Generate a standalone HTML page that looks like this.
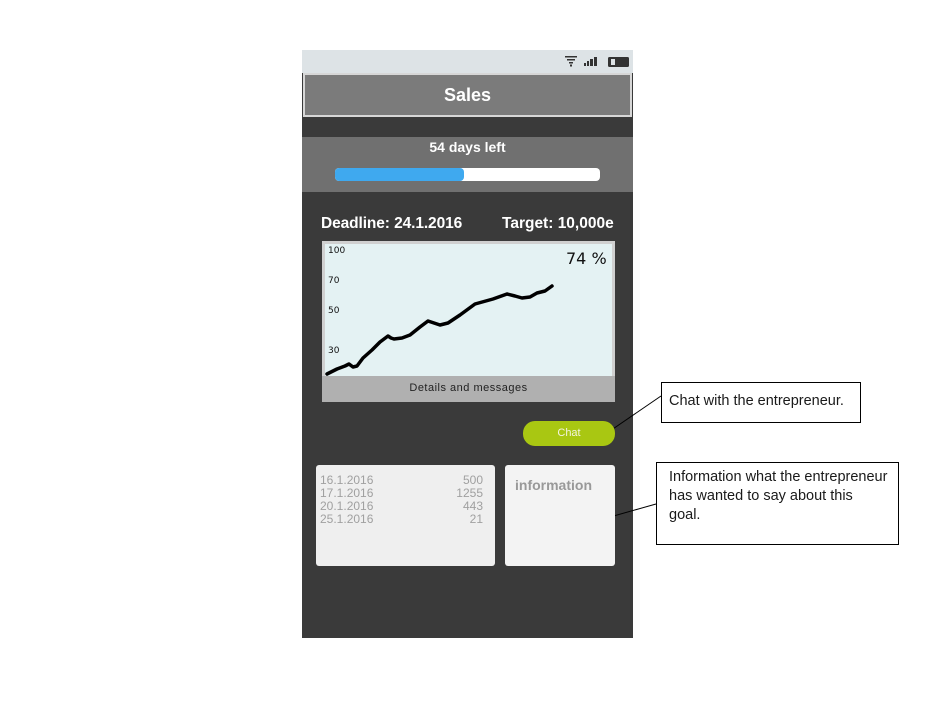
<!DOCTYPE html>
<html><head><meta charset="utf-8"><style>
*{margin:0;padding:0;box-sizing:border-box}
body{width:927px;height:707px;background:#fff;position:relative;font-family:"Liberation Sans",Arial,sans-serif;overflow:hidden}
.a{position:absolute}
.note{position:absolute;border:1px solid #000;background:#fff;font-family:"Liberation Sans",sans-serif;font-size:14.5px;color:#1a1a1a;line-height:19px;padding:0 0 0 12px;white-space:nowrap}
</style></head><body>
<div class="a" style="left:302px;top:50px;width:331px;height:588px;background:#3a3a3a"></div>
<div class="a" style="left:302px;top:50px;width:331px;height:23px;background:#dde3e6"></div>
<svg class="a" style="left:560px;top:50px" width="75" height="23">
<g fill="#333"><rect x="5" y="6" width="12" height="1.5"/><rect x="7" y="9" width="8" height="1.5"/><rect x="9" y="12" width="4" height="1.5"/><rect x="10" y="14.5" width="2" height="2"/>
<rect x="24" y="13" width="2" height="3"/><rect x="27" y="11" width="2" height="5"/><rect x="30" y="9" width="3" height="7"/><rect x="34" y="7" width="3" height="9"/>
<rect x="48" y="7" width="21" height="10" rx="1.5"/></g><rect x="51" y="9" width="4" height="6" fill="#dde3e6"/></svg>
<div class="a" style="left:303px;top:73px;width:329px;height:44px;background:#7b7b7b;border:2px solid #d7d7d7;color:#fff;font-weight:bold;font-size:18px;text-align:center;line-height:40px">Sales</div>
<div class="a" style="left:302px;top:137px;width:331px;height:55px;background:#707070"></div>
<div class="a" style="left:302px;top:139px;width:331px;color:#fff;font-weight:bold;font-size:14px;text-align:center">54 days left</div>
<div class="a" style="left:335px;top:168px;width:265px;height:13px;background:#fff;border-radius:4px"></div>
<div class="a" style="left:335px;top:168px;width:129px;height:13px;background:#3fa9ef;border-radius:4px"></div>
<div class="a" style="left:321px;top:215px;color:#fff;font-weight:bold;font-size:15.5px;letter-spacing:-0.1px">Deadline: 24.1.2016</div>
<div class="a" style="left:502px;top:215px;color:#fff;font-weight:bold;font-size:15.5px;letter-spacing:0px">Target: 10,000e</div>
<div class="a" style="left:322px;top:241px;width:293px;height:161px;background:#d0d0d0"></div>
<div class="a" style="left:325px;top:244px;width:287px;height:133px;background:#e4f2f3"></div>
<div class="a" style="left:322px;top:376px;width:293px;height:26px;background:#b0b0b0;font-size:11px;color:#222;text-align:center;line-height:24px;letter-spacing:.5px">Details and messages</div>
<div class="a" style="left:328px;top:246px;font-size:9px;color:#111;font-family:'DejaVu Sans',sans-serif">100</div>
<div class="a" style="left:328px;top:276px;font-size:9px;color:#111;font-family:'DejaVu Sans',sans-serif">70</div>
<div class="a" style="left:328px;top:306px;font-size:9px;color:#111;font-family:'DejaVu Sans',sans-serif">50</div>
<div class="a" style="left:328px;top:346px;font-size:9px;color:#111;font-family:'DejaVu Sans',sans-serif">30</div>
<div class="a" style="left:566px;top:249px;font-size:16px;color:#111;font-family:'DejaVu Sans',sans-serif">74 %</div>
<svg class="a" style="left:0;top:0" width="927" height="707">
<polyline fill="none" stroke="#000" stroke-width="3.5" stroke-linejoin="round" stroke-linecap="round" points="327,374 337,369 345,366 349,364 353,367 357,366 363,358 372,350 380,342 388,336 391,338 394,339 402,338 410,335 420,327 428,321 434,323 440,325 448,323 460,315 475,304 493,299 507,294 515,296 522,298 530,297 537,293 545,291 552,286"/>
<line x1="607" y1="433" x2="661" y2="396" stroke="#000" stroke-width="1"/>
<line x1="596" y1="521" x2="656" y2="504" stroke="#000" stroke-width="1"/>
</svg>
<div class="a" style="left:523px;top:421px;width:92px;height:25px;background:#a9c712;border-radius:12px;color:#f4f4e0;font-size:11px;text-align:center;line-height:25px">Chat</div>
<div class="a" style="left:316px;top:465px;width:179px;height:101px;background:#efefef;border-radius:3px;color:#a0a0a0;font-size:12px;line-height:13px;padding:9px 12px 0 4px">
<div style="display:flex;justify-content:space-between"><span>16.1.2016</span><span>500</span></div>
<div style="display:flex;justify-content:space-between"><span>17.1.2016</span><span>1255</span></div>
<div style="display:flex;justify-content:space-between"><span>20.1.2016</span><span>443</span></div>
<div style="display:flex;justify-content:space-between"><span>25.1.2016</span><span>21</span></div>
</div>
<div class="a" style="left:505px;top:465px;width:110px;height:101px;background:#f3f3f3;border-radius:3px;color:#999;font-size:14px;font-weight:bold;padding:12px 0 0 10px">information</div>
<div class="note" style="left:661px;top:382px;width:200px;height:41px;padding-top:9px;padding-left:7px">Chat with the entrepreneur.</div>
<div class="note" style="left:656px;top:462px;width:243px;height:83px;padding-top:5px">Information what the entrepreneur<br>has wanted to say about this<br>goal.</div>
</body></html>
